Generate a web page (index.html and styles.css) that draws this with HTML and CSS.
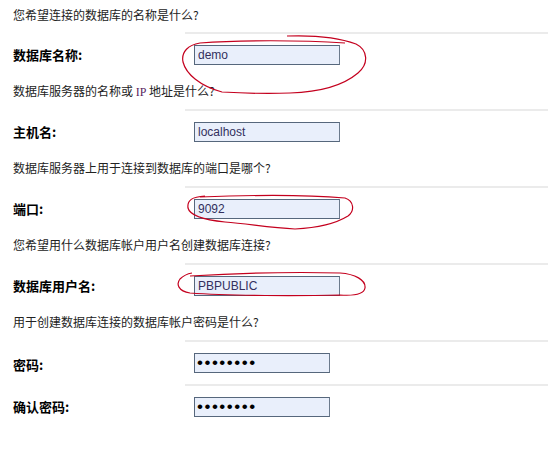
FILE: index.html
```html
<!DOCTYPE html>
<html lang="zh-CN">
<head>
    <meta charset="UTF-8">
    <meta name="viewport" content="width=device-width, initial-scale=1.0">
    <title>数据库连接</title>
    <link rel="stylesheet" href="styles.css">
</head>
<body>

    <form class="db-form">
        <div class="question first">您希望连接的数据库的名称是什么?</div>
        <div class="field">
            <label class="field-label">数据库名称:</label>
            <div class="field-control"><input type="text" value="demo" readonly></div>
        </div>

        <div class="question">数据库服务器的名称或 <span class="ip">IP</span> 地址是什么?</div>
        <div class="field">
            <label class="field-label">主机名:</label>
            <div class="field-control"><input type="text" value="localhost" readonly></div>
        </div>

        <div class="question">数据库服务器上用于连接到数据库的端口是哪个?</div>
        <div class="field">
            <label class="field-label">端口:</label>
            <div class="field-control"><input type="text" value="9092" readonly></div>
        </div>

        <div class="question">您希望用什么数据库帐户用户名创建数据库连接?</div>
        <div class="field">
            <label class="field-label">数据库用户名:</label>
            <div class="field-control"><input type="text" value="PBPUBLIC" readonly></div>
        </div>

        <div class="question">用于创建数据库连接的数据库帐户密码是什么?</div>
        <div class="field tight">
            <label class="field-label">密码:</label>
            <div class="field-control"><input class="pw" type="password" value="pbpublic" readonly></div>
        </div>
        <div class="field">
            <label class="field-label">确认密码:</label>
            <div class="field-control"><input class="pw" type="password" value="pbpublic" readonly></div>
        </div>
    </form>

    <!-- hand-drawn marks over the form -->
    <svg class="marks" width="558" height="459" viewBox="0 0 558 459">
        <path d="M287 36 C315 35 340 38 356 44 C368 50 369 64 358 73 C345 84 322 92 290 93 C265 94 240 93 222 92 C200 86 186 74 183 62 C181 52 188 45 200 43 C240 40 300 40 345 43"/>
        <path d="M200 197 C250 195 310 195 345 198 C354 201 355 211 348 216 C335 224 315 228 295 229 C270 228 250 224 225 222 C205 220 190 216 188 208 C187 200 192 197 205 196"/>
        <path d="M190 276 C240 273 300 272 340 273 C355 274 366 280 365 288 C364 294 355 296 340 295 C300 296 230 296 190 293 C178 291 176 284 180 279 C183 276 186 274 192 273"/>
    </svg>

</body>
</html>
```

FILE: styles.css
```css
body {
    margin: 0;
    background-color: #fff;
    font-family: "Noto Sans CJK SC", "Liberation Sans", sans-serif;
    font-size: 12px;
    color: #222;
}

.db-form {
    padding-left: 13px;
    width: 535px;
}

.question {
    height: 36px;
    line-height: 36px;
    white-space: nowrap;
}

.question.first {
    height: 32px;
    line-height: 30px;
}

.ip {
    font-family: "Liberation Serif", serif;
    color: #5a1f5f;
    font-size: 12px;
}

.field {
    display: grid;
    grid-template-columns: 172px 363px;
    align-items: stretch;
}

.field-label {
    display: flex;
    align-items: center;
    font-weight: bold;
    font-size: 13px;
    color: #000;
    padding-top: 4px;
}

.field-control {
    border-top: 2px solid #ebebeb;
    padding: 11px 0 8px 9px;
}

.field.tight .field-control {
    padding-bottom: 11px;
}

.field-control input {
    box-sizing: border-box;
    width: 146px;
    height: 20px;
    margin: 0;
    padding: 0 3px;
    border: 1px solid #56677c;
    border-right-color: #6b7a8c;
    background-color: #e9effb;
    font-family: "Liberation Sans", sans-serif;
    font-size: 12px;
    color: #33305e;
    outline: none;
    display: block;
}

.field-control input.pw {
    width: 136px;
    padding: 0 2px;
    color: #000;
    font-size: 17px;
    letter-spacing: 1.5px;
}

.marks {
    position: absolute;
    top: 0;
    left: 0;
    pointer-events: none;
}

.marks path {
    fill: none;
    stroke: #c4001e;
    stroke-width: 1.2;
}
```
